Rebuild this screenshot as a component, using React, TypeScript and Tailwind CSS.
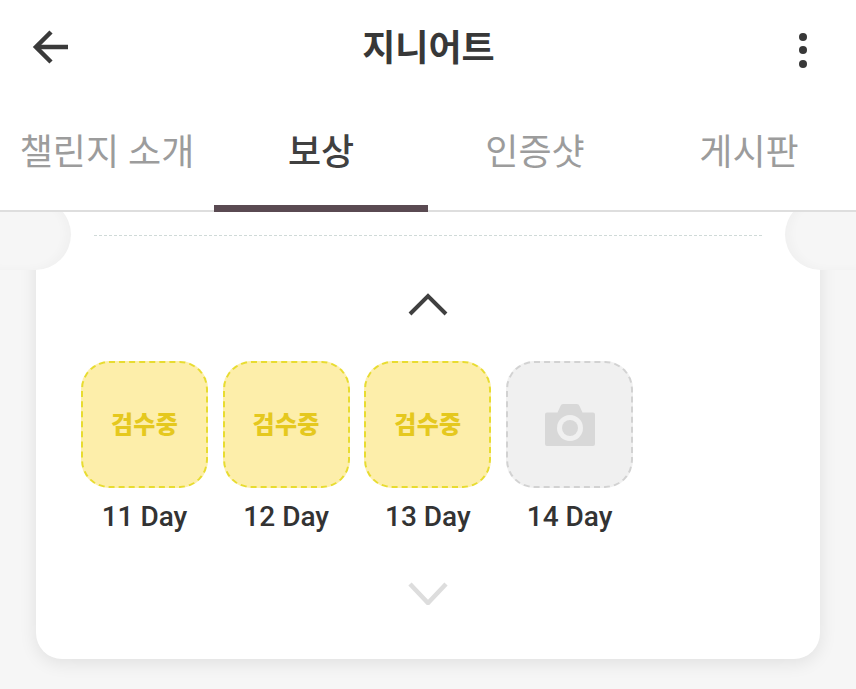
const KR = "font-['Roboto','Noto_Sans_CJK_KR',sans-serif]";

function Tile({ day, pending }: { day: number; pending: boolean }) {
  return (
    <div className="flex w-[127px] flex-col items-center">
      {pending ? (
        <div className="flex h-[127px] w-[127px] items-center justify-center rounded-[28px] border-2 border-dashed border-[#e8dc30] bg-[#fdeeaa]">
          <span className="text-[24px] leading-none font-black tracking-[0.3px] text-[#e5c81e]">검수중</span>
        </div>
      ) : (
        <div className="flex h-[127px] w-[127px] items-center justify-center rounded-[28px] border-2 border-dashed border-[#d2d2d2] bg-[#f0f0f0]">
          <svg width="50" height="42" viewBox="0 0 50 42" className="mt-[1px]">
            <path d="M0 10.5a2 2 0 0 1 2-2h10.5l3-6.5a3 3 0 0 1 2.7-2h13.6a3 3 0 0 1 2.7 2l3 6.5H48a2 2 0 0 1 2 2V40a2 2 0 0 1-2 2H2a2 2 0 0 1-2-2z" fill="#d8d8d8" />
            <circle cx="25" cy="24" r="13" fill="#f0f0f0" />
            <circle cx="25" cy="24" r="8" fill="#d8d8d8" />
          </svg>
        </div>
      )}
      <div className="mt-[14px] text-[28px] leading-[30px] font-medium text-[#333333]">{day} Day</div>
    </div>
  );
}

function Tab({ label, active }: { label: string; active?: boolean }) {
  return (
    <div className={`relative flex h-full flex-1 items-center justify-center pb-[1px] text-[36px] ${active ? "font-medium text-[#404040]" : "text-[#9c9c9c]"}`}>
      {label}
      {active && <div className="absolute right-0 -bottom-[1.5px] left-0 h-[7px] bg-[#5a4a52]" />}
    </div>
  );
}

export default function App() {
  return (
    <div className={`${KR} h-[689px] w-[856px] overflow-hidden bg-[#f6f6f6]`}>
      <div className="bg-white">
        <div className="grid h-[96px] grid-cols-[1fr_auto_1fr] items-center pr-[49px] pl-[31px]">
          <svg width="40" height="38" viewBox="0 0 40 38" fill="none" stroke="#3a3a3a" strokeWidth="4.5" className="-mt-[3px]">
            <path d="M37 19H5" />
            <path d="M20 4 5 19l15 15" />
          </svg>
          <div className="ml-[19px] pt-[1px] text-[36px] leading-none font-bold text-[#383838]">지니어트</div>
          <div className="flex w-[8px] flex-col gap-[5.5px] justify-self-end pt-[4px]">
            <span className="h-[8px] w-[8px] rounded-full bg-[#383838]" />
            <span className="h-[8px] w-[8px] rounded-full bg-[#383838]" />
            <span className="h-[8px] w-[8px] rounded-full bg-[#383838]" />
          </div>
        </div>
        <div className="flex h-[116px] border-b-2 border-[#dedede]">
          <Tab label="챌린지 소개" />
          <Tab label="보상" active />
          <Tab label="인증샷" />
          <Tab label="게시판" />
        </div>
      </div>

      <div className="relative overflow-hidden pb-[30px]">
        <div className="mx-[36px] flex h-[447px] flex-col rounded-b-[26px] bg-white shadow-[0_4px_18px_rgba(0,0,0,0.09)]">
          <div className="mx-[58px] mt-[23px] border-t-[1px] border-dashed border-[#d0dad8]" />
          <div className="mt-[57px] flex justify-center">
            <svg width="40" height="23" viewBox="0 0 40 23" fill="none" stroke="#404040" strokeWidth="4">
              <path d="M2 21 20 3l18 18" />
            </svg>
          </div>
          <div className="mt-[45px] flex gap-[14.7px] pl-[45px]">
            <Tile day={11} pending />
            <Tile day={12} pending />
            <Tile day={13} pending />
            <Tile day={14} pending={false} />
          </div>
          <div className="mt-[50px] flex justify-center">
            <svg width="40" height="23" viewBox="0 0 40 23" fill="none" stroke="#dddddd" strokeWidth="4.5">
              <path d="M2 2l18 19L38 2" />
            </svg>
          </div>
        </div>
        <div className="absolute top-[-13px] left-0 h-[71px] w-[71px] rounded-tr-[36px] rounded-br-[36px] bg-[#f6f6f6] shadow-[inset_-6px_-1px_8px_rgba(0,0,0,0.025)]" />
        <div className="absolute top-[-13px] right-0 h-[71px] w-[71px] rounded-tl-[36px] rounded-bl-[36px] bg-[#f6f6f6] shadow-[inset_6px_-1px_8px_rgba(0,0,0,0.025)]" />
      </div>
    </div>
  );
}
